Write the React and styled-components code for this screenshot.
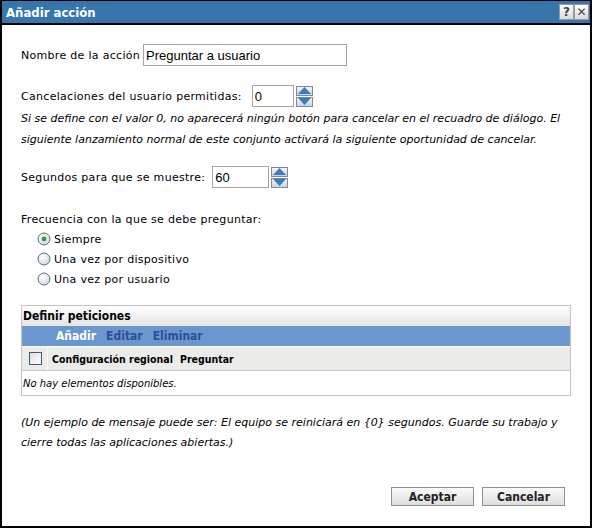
import React, { useState } from 'react'
import styled, { createGlobalStyle } from 'styled-components'

const Global = createGlobalStyle`
  html, body { margin: 0; padding: 0; background: #fff; }
  body { font-family: "DejaVu Sans", sans-serif; font-size: 11px; letter-spacing: 0.3px; color: #000; }
  * { box-sizing: border-box; }
`

const Dialog = styled.div`
  width: 592px;
  height: 528px;
  border: 2px solid #000;
  border-top-width: 1px;
  display: flex;
  flex-direction: column;
  background: #fff;
`

const TitleBar = styled.div`
  height: 24px;
  background: #3676ab;
  border-bottom: 2px solid #000;
  display: flex;
  align-items: center;
  justify-content: space-between;
  padding: 0 1px 0 4px;
`

const Title = styled.div`
  color: #fff;
  font-family: "DejaVu Sans Condensed", "DejaVu Sans", sans-serif;
  font-weight: bold;
  font-size: 13px;
  letter-spacing: 0;
`

const TitleButtons = styled.div`
  display: flex;
`

const TitleButton = styled.div`
  width: 15px;
  height: 16px;
  background: linear-gradient(#ffffff, #d8d8d8);
  border: 1px solid #9a9a9a;
  color: #444;
  font-family: "DejaVu Sans", sans-serif;
  font-weight: bold;
  font-size: 12px;
  letter-spacing: 0;
  display: flex;
  align-items: center;
  justify-content: center;
`

const Body = styled.div`
  flex: 1;
  display: flex;
  flex-direction: column;
  padding: 19px 25px 0 19px;
`

const FieldRow = styled.div`
  display: flex;
  align-items: center;
  gap: ${p => p.gap || 3}px;
  margin-top: ${p => p.mt || 0}px;
  height: 22px;
`

const Label = styled.span`
  white-space: nowrap;
`

const TextInput = styled.div`
  width: ${p => p.w}px;
  height: ${p => p.h || 22}px;
  border: 1px solid #a5a5a5;
  font-family: "Liberation Sans", Arial, sans-serif;
  font-size: 13px;
  letter-spacing: 0;
  padding: 0 2px;
  display: flex;
  align-items: center;
`

const Spinner = styled.div`
  display: flex;
  flex-direction: column;
  gap: 1px;
`

const SpinBtn = styled.div`
  width: 17px;
  height: 10px;
  border: 1px solid #7a8a9a;
  background: linear-gradient(#f4f7fa, #c9d3de);
  display: flex;
  align-items: center;
  justify-content: center;
`

const Help = styled.div`
  font-style: italic;
  font-size: 11px;
  letter-spacing: 0;
  line-height: 21px;
  margin-top: ${p => p.mt || 0}px;
  white-space: nowrap;
`

const Radios = styled.div`
  display: flex;
  flex-direction: column;
  padding-left: 16px;
  margin-top: -1px;
`

const RadioRow = styled.label`
  display: flex;
  align-items: center;
  gap: 3px;
  height: 20px;
  cursor: pointer;
`

const Panel = styled.div`
  margin-top: 16px;
  border: 1px solid #c4c4c4;
  width: 550px;
`

const PanelHead = styled.div`
  height: 20px;
  background: linear-gradient(#ffffff, #e3e3e3);
  font-family: "DejaVu Sans Condensed", "DejaVu Sans", sans-serif;
  font-weight: bold;
  font-size: 12px;
  letter-spacing: 0;
  display: flex;
  align-items: center;
  padding-left: 1px;
`

const Toolbar = styled.div`
  height: 20px;
  background: #6b96ce;
  display: flex;
  align-items: center;
  gap: 10px;
  padding-left: 34px;
  font-family: "DejaVu Sans Condensed", "DejaVu Sans", sans-serif;
  font-weight: bold;
  font-size: 12px;
  letter-spacing: 0;
`

const ToolLink = styled.span`
  color: ${p => (p.active ? '#fff' : '#2b4f9b')};
`

const ColHead = styled.div`
  height: 25px;
  background: #ebebea;
  border-top: 1px solid #fff;
  border-bottom: 1px solid #c8c8c8;
  display: flex;
  align-items: center;
  font-family: "DejaVu Sans Condensed", "DejaVu Sans", sans-serif;
  font-weight: bold;
  font-size: 10.5px;
  letter-spacing: 0;
`

const CheckCell = styled.div`
  width: 26px;
  height: 100%;
  border-right: 1px solid #fbfbfb;
  display: flex;
  align-items: center;
  justify-content: center;
  padding-left: 2px;
  flex-shrink: 0;
`

const Check = styled.div`
  width: 13px;
  height: 13px;
  border: 1px solid #3c5a78;
  background: linear-gradient(135deg, #dcdcdc, #ffffff);
`

const ColLabel = styled.div`
  padding-left: ${p => p.pl}px;
  width: ${p => p.w ? `${p.w}px` : 'auto'};
  flex-shrink: 0;
  white-space: nowrap;
`

const Empty = styled.div`
  height: 24px;
  display: flex;
  align-items: center;
  font-style: italic;
  font-size: 10px;
  letter-spacing: 0;
  padding-left: 1px;
`

const Note = styled.div`
  margin-top: 17px;
  font-style: italic;
  font-size: 11px;
  letter-spacing: 0;
  line-height: 20px;
  white-space: nowrap;
`

const Footer = styled.div`
  margin-top: auto;
  margin-bottom: 20px;
  display: flex;
  justify-content: flex-end;
  gap: 8px;
`

const Button = styled.button`
  width: 83px;
  height: 19px;
  border: 1px solid #8e8e8e;
  background: linear-gradient(#fafafa, #dedede);
  font-family: "DejaVu Sans Condensed", "DejaVu Sans", sans-serif;
  font-weight: bold;
  font-size: 12px;
  letter-spacing: 0;
  color: #222;
  padding: 0;
`

const Arrow = ({ up }) => (
  <svg width="13" height="7" viewBox="0 0 13 7">
    <polygon points={up ? '6.5,0 13,7 0,7' : '0,0 13,0 6.5,7'} fill="#3d7bc0" />
  </svg>
)

const SpinnerCtl = () => (
  <Spinner>
    <SpinBtn><Arrow up /></SpinBtn>
    <SpinBtn><Arrow /></SpinBtn>
  </Spinner>
)

const Radio = ({ checked }) => (
  <svg width="14" height="14" viewBox="0 0 14 14">
    <defs>
      <radialGradient id="rg" cx="40%" cy="35%" r="70%">
        <stop offset="0" stopColor="#ffffff" />
        <stop offset="1" stopColor="#d0d6de" />
      </radialGradient>
    </defs>
    <circle cx="7" cy="7" r="6" fill="url(#rg)" stroke="#5d6d80" strokeWidth="1" />
    {checked && <circle cx="7" cy="7" r="2.4" fill="#2f9a3a" />}
  </svg>
)

const options = ['Siempre', 'Una vez por dispositivo', 'Una vez por usuario']

export default function App() {
  const [freq, setFreq] = useState(0)
  return (
    <>
      <Global />
      <Dialog>
        <TitleBar>
          <Title>Añadir acción</Title>
          <TitleButtons>
            <TitleButton>?</TitleButton>
            <TitleButton>✕</TitleButton>
          </TitleButtons>
        </TitleBar>
        <Body>
          <FieldRow gap={3}>
            <Label>Nombre de la acción</Label>
            <TextInput w={204}>Preguntar a usuario</TextInput>
          </FieldRow>
          <FieldRow mt={19} gap={10}>
            <Label>Cancelaciones del usuario permitidas:</Label>
            <FieldRow gap={2}>
              <TextInput w={42}>0</TextInput>
              <SpinnerCtl />
            </FieldRow>
          </FieldRow>
          <Help mt={1}>
            Si se define con el valor 0, no aparecerá ningún botón para cancelar en el recuadro de diálogo. El
            <br />
            siguiente lanzamiento normal de este conjunto activará la siguiente oportunidad de cancelar.
          </Help>
          <FieldRow mt={16} gap={7}>
            <Label>Segundos para que se muestre:</Label>
            <FieldRow gap={2}>
              <TextInput w={57}>60</TextInput>
              <SpinnerCtl />
            </FieldRow>
          </FieldRow>
          <FieldRow mt={20}>
            <Label>Frecuencia con la que se debe preguntar:</Label>
          </FieldRow>
          <Radios>
            {options.map((o, i) => (
              <RadioRow key={o} onClick={() => setFreq(i)}>
                <Radio checked={freq === i} />
                <span>{o}</span>
              </RadioRow>
            ))}
          </Radios>
          <Panel>
            <PanelHead>Definir peticiones</PanelHead>
            <Toolbar>
              <ToolLink active>Añadir</ToolLink>
              <ToolLink>Editar</ToolLink>
              <ToolLink>Eliminar</ToolLink>
            </Toolbar>
            <ColHead>
              <CheckCell><Check /></CheckCell>
              <ColLabel pl={4} w={132}>Configuración regional</ColLabel>
              <ColLabel pl={0}>Preguntar</ColLabel>
            </ColHead>
            <Empty>No hay elementos disponibles.</Empty>
          </Panel>
          <Note>
            (Un ejemplo de mensaje puede ser: El equipo se reiniciará en {'{0}'} segundos. Guarde su trabajo y
            <br />
            cierre todas las aplicaciones abiertas.)
          </Note>
          <Footer>
            <Button>Aceptar</Button>
            <Button>Cancelar</Button>
          </Footer>
        </Body>
      </Dialog>
    </>
  )
}
